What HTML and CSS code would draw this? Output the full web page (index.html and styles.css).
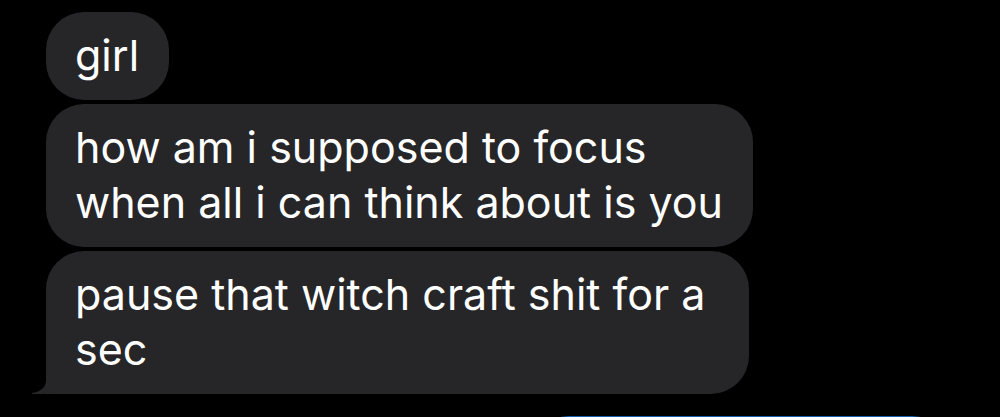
FILE: index.html
```html
<!DOCTYPE html>
<html>
  <head>
    <title>Messages</title>
    <link rel="stylesheet" href="styles.css">
  </head>
  <body>
    <div class="thread">
      <div class="bubble received">girl</div>
      <div class="bubble received">how am i supposed to focus<br>when all i can think about is you</div>
      <div class="bubble received last">pause that witch craft shit for a sec</div>
      <div class="bubble sent">&nbsp;</div>
    </div>
  </body>
</html>
```

FILE: styles.css
```css
/* dark mode message thread */
body {
  margin: 0;
  background-color: #000;
  font-family: Inter, "Liberation Sans", Arial, sans-serif;
  overflow: hidden;
}

.thread {
  display: flex;
  flex-direction: column;
  align-items: flex-start;
  gap: 4px;
  padding: 12px 0 0 46px;
}

.bubble {
  font-size: 43px;
  line-height: 55px;
  color: #fff;
  padding: 16px 30px 17px 29px;
  border-radius: 38px;
  max-width: 675px;
  position: relative;
}

.received {
  background-color: #262628;
}

.last {
  max-width: 644px;
  border-bottom-left-radius: 0;
}

/* tail at the bottom left of the last bubble */
.last::before {
  content: "";
  position: absolute;
  left: -14px;
  bottom: 0;
  width: 32px;
  height: 24px;
  background-color: #262628;
  border-bottom-right-radius: 22px 14px;
}

.last::after {
  content: "";
  position: absolute;
  left: -28px;
  bottom: 1px;
  width: 28px;
  height: 26px;
  background-color: #000;
  border-bottom-right-radius: 16px 12px;
}

.sent {
  align-self: flex-end;
  margin: 18px 50px 0 0;
  width: 360px;
  background-color: #1a62b0;
}
```
